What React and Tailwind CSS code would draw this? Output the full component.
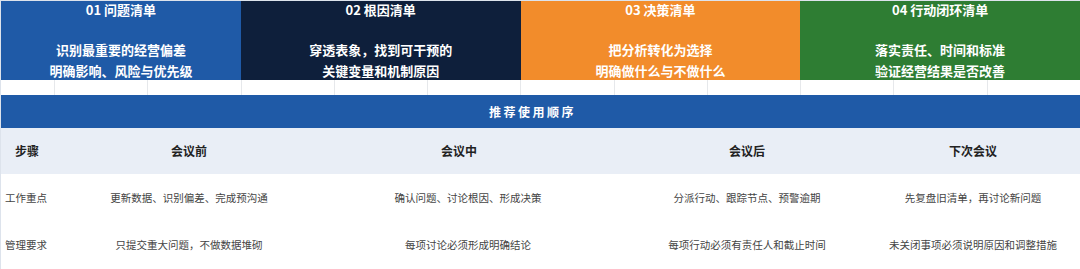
import React from 'react';

const stages = [
  { title: '01 问题清单', lines: ['识别最重要的经营偏差', '明确影响、风险与优先级'], bg: 'bg-[#1f5aa7]', w: 'w-[240px]' },
  { title: '02 根因清单', lines: ['穿透表象，找到可干预的', '关键变量和机制原因'], bg: 'bg-[#0e1f3b]', w: 'w-[280px]' },
  { title: '03 决策清单', lines: ['把分析转化为选择', '明确做什么与不做什么'], bg: 'bg-[#f28c2b]', w: 'w-[280px]' },
  { title: '04 行动闭环清单', lines: ['落实责任、时间和标准', '验证经营结果是否改善'], bg: 'bg-[#2e7d33]', w: 'w-[280px]' },
];

const rows = [
  ['工作重点', '更新数据、识别偏差、完成预沟通', '确认问题、讨论根因、形成决策', '分派行动、跟踪节点、预警逾期', '先复盘旧清单，再讨论新问题'],
  ['管理要求', '只提交重大问题，不做数据堆砌', '每项讨论必须形成明确结论', '每项行动必须有责任人和截止时间', '未关闭事项必须说明原因和调整措施'],
];

const cols = 'grid grid-cols-[88px_200px_340px_236px_216px]';

export default function App() {
  return (
    <div className="w-[1080px] h-[269px] overflow-hidden bg-white border-t border-l border-[#dde3ec] font-['Noto_Sans_CJK_SC',sans-serif]">
      {/* Stage blocks */}
      <div className="flex h-[79px]">
        {stages.map((s) => (
          <div key={s.title} className={`${s.bg} ${s.w} flex flex-col items-center text-white font-bold`}>
            <div className="text-[13px] leading-[18px]">{s.title}</div>
            <div className="mt-[20px] text-[13px] leading-[21px] text-center">
              {s.lines.map((l) => (
                <div key={l}>{l}</div>
              ))}
            </div>
          </div>
        ))}
      </div>

      {/* Spacer grid row */}
      <div className="grid grid-cols-[53px_repeat(11,1fr)] h-[15px]">
        {Array.from({ length: 12 }).map((_, i) => (
          <div key={i} className={i === 0 ? '' : 'border-l border-[#e6e8eb]'} />
        ))}
      </div>

      {/* Section bar */}
      <div className="h-[33px] bg-[#1f5aa7] flex items-center justify-center pr-[16px] text-white text-[12px] font-bold tracking-[2.5px]">
        推荐使用顺序
      </div>

      {/* Header */}
      <div className={`${cols} h-[46px] items-center bg-[#e9eef6] text-[12px] font-bold text-[#222]`}>
        <div className="pl-[14px]">步骤</div>
        <div className="text-center">会议前</div>
        <div className="text-center">会议中</div>
        <div className="text-center">会议后</div>
        <div className="text-center">下次会议</div>
      </div>

      {/* Body */}
      {rows.map((r) => (
        <div key={r[0]} className={`${cols} h-[47px] items-center text-[10.5px] text-[#444]`}>
          <div className="pl-[4px]">{r[0]}</div>
          <div className="text-center">{r[1]}</div>
          <div className="text-center pl-[18px]">{r[2]}</div>
          <div className="text-center">{r[3]}</div>
          <div className="text-center">{r[4]}</div>
        </div>
      ))}
    </div>
  );
}
